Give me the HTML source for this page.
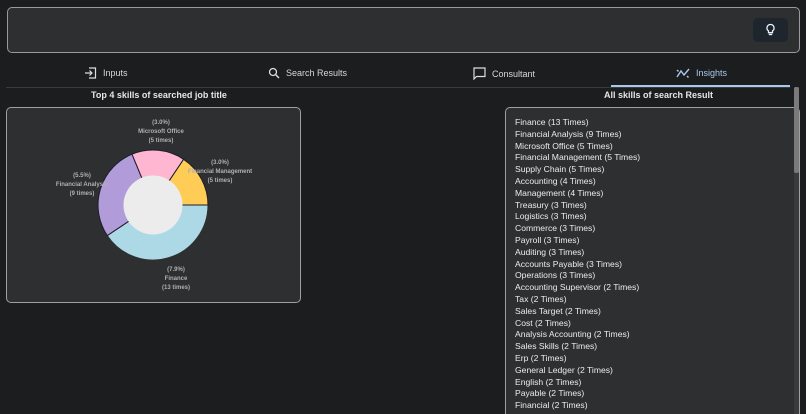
<!DOCTYPE html>
<html style="overflow:hidden;height:414px"><head><meta charset="utf-8"><style>
body{margin:0;width:806px;height:414px;background:#1c1d1f;font-family:"Liberation Sans",sans-serif;color:#e6e6e6;overflow:hidden;position:relative}
.top{position:absolute;left:7px;top:7px;width:791px;height:44px;background:#2e2f31;border:1px solid #9a9a9a;border-radius:5px}
.btn{position:absolute;left:753px;top:18px;width:35px;height:24px;background:#1f252d;border-radius:5px}
.tab{position:absolute;top:67px;font-size:9px;color:#d8d8d8;display:flex;align-items:center;gap:6px}
.line{position:absolute;left:6px;top:87px;width:784px;height:1px;background:#3a3b3d}
.ul{position:absolute;left:611px;top:85px;width:179px;height:2px;background:#a8c8f0}
h4{position:absolute;margin:0;font-size:9px;font-weight:bold;color:#e6e6e6;top:90px}
.card{position:absolute;background:#2e2f31;border:1px solid #a0a0a0;border-radius:5px}
.list{position:absolute;left:515px;top:117px;font-size:8.6px;line-height:11.8px;color:#ececec}
.track{position:absolute;left:794px;top:87px;width:5px;height:327px;background:#3a3b3d}
.sb{position:absolute;left:794px;top:87px;width:5px;height:86px;background:#7a7a7a;border-radius:2px}
</style></head><body>
<div class="top"></div>
<div class="btn"><svg width="35" height="24" viewBox="0 0 35 24"><path d="M17.5 6.5a3.5 3.5 0 0 0-2 6.4v1.8h4v-1.8a3.5 3.5 0 0 0-2-6.4z" fill="none" stroke="#e8f0ff" stroke-width="1.3"/><path d="M15.8 16.5h3.4" stroke="#e8f0ff" stroke-width="1.3"/></svg></div>
<div class="tab" style="left:84px"><svg width="13" height="12" viewBox="0 0 13 12"><path d="M5 1h6.5v10H5M1 6h7M5.5 3.5 8 6 5.5 8.5" fill="none" stroke="#ddd" stroke-width="1.2"/></svg>Inputs</div>
<div class="tab" style="left:268px"><svg width="12" height="12" viewBox="0 0 12 12"><circle cx="5" cy="5" r="3.5" fill="none" stroke="#ddd" stroke-width="1.3"/><path d="M7.5 7.5 11 11" stroke="#ddd" stroke-width="1.4"/></svg>Search Results</div>
<div class="tab" style="left:473px"><svg width="13" height="13" viewBox="0 0 13 13"><path d="M1 1h11v8.5H3.5L1 12z" fill="none" stroke="#ddd" stroke-width="1.2"/></svg>Consultant</div>
<div class="tab" style="left:676px;color:#a8c8f0"><svg width="14" height="12" viewBox="0 0 14 12"><path d="M1 10 5 4l3 4 5-6M1 3l1.5 1.5M11 9l1.5 1.5" fill="none" stroke="#a8c8f0" stroke-width="1.4"/></svg>Insights</div>
<div class="line"></div><div class="ul"></div>
<h4 style="left:91px">Top 4 skills of searched job title</h4>
<h4 style="left:604px">All skills of search Result</h4>
<div class="card" style="left:6px;top:107px;width:293px;height:194px"></div>
<svg style="position:absolute;left:0;top:0" width="310" height="310">
<path d="M153 205L208 205A55 55 0 0 1 107.3 235.6Z" fill="#add8e6" stroke="#2e2f31" stroke-width="1"/>
<path d="M153 205L107.3 235.6A55 55 0 0 1 132 154.2Z" fill="#b19cd9" stroke="#1c1d2a" stroke-width="1"/>
<path d="M153 205L132 154.2A55 55 0 0 1 183.6 159.3Z" fill="#ffb6d1" stroke="#1c1d2a" stroke-width="1"/>
<path d="M153 205L183.6 159.3A55 55 0 0 1 208 205Z" fill="#ffcc55" stroke="#1c1d2a" stroke-width="1"/>
<circle cx="153" cy="205" r="29.5" fill="#ececec"/>
<g font-size="6" font-weight="bold" fill="#b0b0b0" text-anchor="middle" font-family="Liberation Sans,sans-serif">
<text x="161" y="124">(3.0%)</text><text x="161" y="133">Microsoft Office</text><text x="161" y="142">(5 times)</text>
<text x="220" y="164">(3.0%)</text><text x="220" y="173">Financial Management</text><text x="220" y="182">(5 times)</text>
<text x="82" y="177">(5.5%)</text><text x="82" y="186">Financial Analysis</text><text x="82" y="195">(9 times)</text>
<text x="176" y="271">(7.9%)</text><text x="176" y="280">Finance</text><text x="176" y="289">(13 times)</text>
</g></svg>
<div class="card" style="left:505px;top:107px;width:293px;height:320px"></div>
<div class="track"></div><div class="sb"></div>
<div class="list">Finance (13 Times)<br>Financial Analysis (9 Times)<br>Microsoft Office (5 Times)<br>Financial Management (5 Times)<br>Supply Chain (5 Times)<br>Accounting (4 Times)<br>Management (4 Times)<br>Treasury (3 Times)<br>Logistics (3 Times)<br>Commerce (3 Times)<br>Payroll (3 Times)<br>Auditing (3 Times)<br>Accounts Payable (3 Times)<br>Operations (3 Times)<br>Accounting Supervisor (2 Times)<br>Tax (2 Times)<br>Sales Target (2 Times)<br>Cost (2 Times)<br>Analysis Accounting (2 Times)<br>Sales Skills (2 Times)<br>Erp (2 Times)<br>General Ledger (2 Times)<br>English (2 Times)<br>Payable (2 Times)<br>Financial (2 Times)</div>
</body></html>
